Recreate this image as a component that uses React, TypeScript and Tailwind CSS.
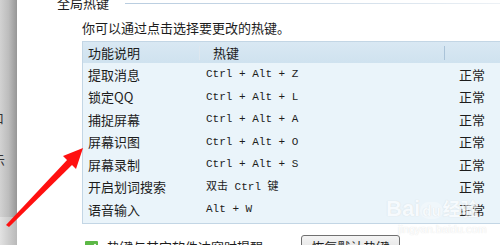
import React from 'react';

const rows = [
  { name: '提取消息', key: 'Ctrl + Alt + Z' },
  { name: '锁定QQ', key: 'Ctrl + Alt + L' },
  { name: '捕捉屏幕', key: 'Ctrl + Alt + A' },
  { name: '屏幕识图', key: 'Ctrl + Alt + O' },
  { name: '屏幕录制', key: 'Ctrl + Alt + S' },
  { name: '开启划词搜索', key: '双击 Ctrl 键' },
  { name: '语音输入', key: 'Alt + W' },
];

// Red annotation arrow drawn over the page
const Arrow = () => (
  <svg className="absolute left-0 top-0 pointer-events-none" width="500" height="245" viewBox="0 0 500 245">
    <polygon points="6,225 9,227 73,164 68,159" fill="#ff1010" />
    <polygon points="83,148 63,156 76,169" fill="#ff1010" />
  </svg>
);

const Check = () => (
  <svg width="13" height="13" viewBox="0 0 13 13">
    <rect x="0" y="0" width="13" height="13" rx="1" fill="#5cb846" />
    <path d="M3 6.8 L5.5 9.2 L10 3.8" stroke="#fff" strokeWidth="1.8" fill="none" strokeLinecap="round" strokeLinejoin="round" />
  </svg>
);

export default function App() {
  return (
    <div className="relative w-[500px] h-[245px] overflow-hidden bg-white flex text-[13px] text-[#1c1c1c] font-['Noto_Sans_CJK_SC',sans-serif]">
      {/* left window edge */}
      <div className="w-[17px] shrink-0 flex flex-col overflow-hidden">
        <div className="h-[217px] bg-gradient-to-r from-[#d2d2d2] via-[#bdbdbd] to-[#969696] flex flex-col text-[#333]">
          <span className="mt-[110px] -ml-[9px] leading-[16px]">口</span>
          <span className="mt-[26px] -ml-[8px] leading-[16px]">示</span>
        </div>
        <div className="flex-1 bg-gradient-to-r from-[#e2e2e2] to-[#b9b9b9]" />
      </div>

      <div className="flex-1 flex flex-col">
        {/* section title */}
        <div className="-mt-[7px] h-[20px] flex items-center pl-[40px]">
          <span className="leading-[20px]">全局热键</span>
          <div className="flex-1 h-px ml-[16px] bg-gradient-to-r from-[#b9cde0] via-[#cddbe8] to-[#eef2f6]" />
        </div>

        <p className="mt-[5px] pl-[65px] leading-[20px]">你可以通过点击选择要更改的热键。</p>

        {/* hotkey table */}
        <div className="mt-[3px] ml-[65px] w-[425px] border border-[#c3d6e5] bg-[#eaf4fa] pb-[2px]">
          <div className="h-[21px] flex items-center bg-gradient-to-b from-[#d9e8f3] to-[#cfe2ef]">
            <div className="w-[116px] pl-[5px]">功能说明</div>
            <div className="w-px h-[14px] bg-[#aac3d8] border-r border-white/60" />
            <div className="w-[244px] pl-[13px]">热键</div>
            <div className="w-px h-[14px] bg-[#aac3d8]" />
            <div className="flex-1" />
          </div>
          {rows.map((r) => (
            <div key={r.name} className="h-[22.5px] flex items-center">
              <div className="w-[117px] pl-[5px]">{r.name}</div>
              <div className="w-[245px] pl-[6px] text-[11px] font-['Liberation_Mono','Noto_Sans_CJK_SC',monospace]">{r.key}</div>
              <div className="pl-[14px]">正常</div>
            </div>
          ))}
        </div>

        {/* bottom options */}
        <div className="mt-[11px] pl-[68px] flex items-start">
          <div className="mt-[6px]"><Check /></div>
          <span className="ml-[9px] mt-[3px] w-[194px] leading-[18px]">热键与其它软件冲突时提醒</span>
          <button className="w-[99px] h-[24px] border border-[#707070] rounded-[3px] bg-gradient-to-b from-[#f4f4f4] to-[#dcdcdc] leading-[22px] text-[13px]">
            恢复默认热键
          </button>
        </div>
      </div>

      {/* watermark */}
      <div className="absolute left-[386px] top-[196px] flex flex-col items-start opacity-60 pointer-events-none">
        <span className="text-[22px] leading-[24px] font-bold text-white font-['Liberation_Sans',sans-serif] [text-shadow:0_0_1px_#c4c4c4]">
          Bai<span className="text-[15px] bg-white/50 rounded-full px-[2px]">du</span><span className="text-[18px] font-['Noto_Sans_CJK_SC',sans-serif]">经验</span>
        </span>
        <span className="ml-[12px] text-[11px] leading-[12px] text-white font-['Liberation_Sans',sans-serif] [text-shadow:0_0_1px_#c4c4c4]">jingyan.baidu.com</span>
      </div>

      <Arrow />
    </div>
  );
}
